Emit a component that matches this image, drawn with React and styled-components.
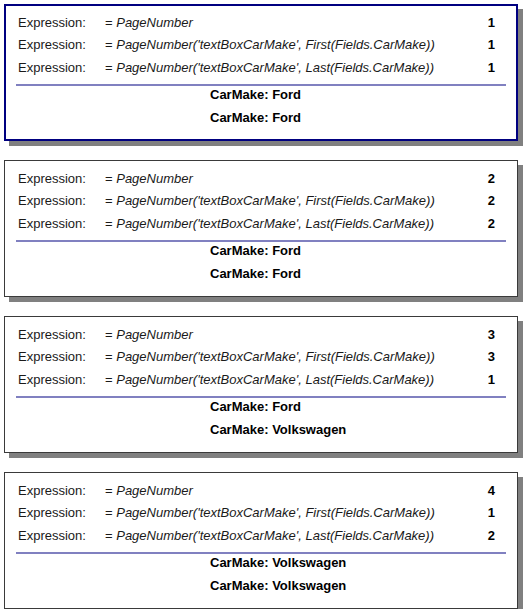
import React from 'react'
import styled, { createGlobalStyle } from 'styled-components'

const pages = [
  { numbers: [1, 1, 1], makes: ['Ford', 'Ford'], active: true },
  { numbers: [2, 2, 2], makes: ['Ford', 'Ford'] },
  { numbers: [3, 3, 1], makes: ['Ford', 'Volkswagen'] },
  { numbers: [4, 1, 2], makes: ['Volkswagen', 'Volkswagen'] },
]

const expressions = [
  'PageNumber',
  "PageNumber('textBoxCarMake', First(Fields.CarMake))",
  "PageNumber('textBoxCarMake', Last(Fields.CarMake))",
]

function App () {
  return (
    <>
      <GlobalStyle />
      <PageList>
        {pages.map((page, i) => (
          <Page key={i} $active={page.active}>
            {expressions.map((expr, j) => (
              <ExprRow key={j}>
                <Label>Expression:</Label>
                <Expr>= <em>{expr}</em></Expr>
                <Num>{page.numbers[j]}</Num>
              </ExprRow>
            ))}
            <Divider />
            {page.makes.map((make, j) => (
              <MakeRow key={j}>CarMake: {make}</MakeRow>
            ))}
          </Page>
        ))}
      </PageList>
    </>
  )
}

export default App

const GlobalStyle = createGlobalStyle`
  body {
    margin: 0;
    background: #fff;
    font-family: "Liberation Sans", Arial, sans-serif;
    color: #000;
  }
`

const PageList = styled.div`
  display: flex;
  flex-direction: column;
  gap: 19px;
  padding: 4px 0 0 4px;
`

const Page = styled.div`
  box-sizing: border-box;
  width: 514px;
  height: 137px;
  padding: ${p => p.$active ? '2px 10px 0' : '3px 11px 0'};
  border: ${p => p.$active ? '2px solid #000080' : '1px solid #3a3a3a'};
  background: #fff;
  box-shadow: 5px 5px 0 #808080;
  font-size: 13px;
`

const ExprRow = styled.div`
  display: flex;
  align-items: center;
  height: 22.5px;
  &:first-child {
    margin-top: 3px;
  }
  color: #1a1a1a;
`

const Label = styled.span`
  width: 87px;
  padding-left: 2px;
`

const Expr = styled.span`
  flex: 1;
  em {
    font-style: italic;
  }
`

const Num = styled.span`
  width: 20px;
  padding-right: 11px;
  text-align: right;
  font-weight: bold;
  color: #000;
`

const Divider = styled.div`
  height: 2px;
  margin-top: 5px;
  background: #8080c0;
`

const MakeRow = styled.div`
  height: 18px;
  line-height: 18px;
  padding-left: 194px;
  font-weight: bold;
  & + & {
    margin-top: 5px;
  }
`
